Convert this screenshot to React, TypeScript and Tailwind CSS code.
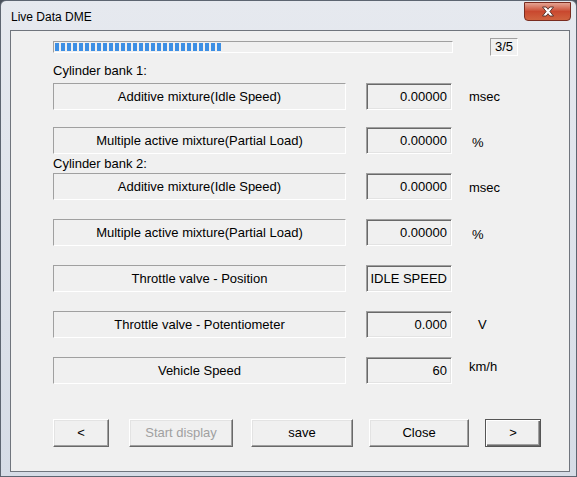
import React from 'react';

type Row = {
  label: string;
  value: string;
  unit?: string;
  unitClass?: string;
  gap: string;
};

const rowsBank1: Row[] = [
  { label: 'Additive mixture(Idle Speed)', value: '0.00000', unit: 'msec', unitClass: 'ml-[17px]', gap: 'mt-[5px]' },
  { label: 'Multiple active mixture(Partial Load)', value: '0.00000', unit: '%', unitClass: 'ml-[20px] mt-[4px]', gap: 'mt-[17px]' },
];

const rowsBank2: Row[] = [
  { label: 'Additive mixture(Idle Speed)', value: '0.00000', unit: 'msec', unitClass: 'ml-[17px] mt-[2px]', gap: '' },
  { label: 'Multiple active mixture(Partial Load)', value: '0.00000', unit: '%', unitClass: 'ml-[20px] mt-[4px]', gap: 'mt-[19px]' },
  { label: 'Throttle valve - Position', value: 'IDLE SPEED', gap: 'mt-[19px]' },
  { label: 'Throttle valve - Potentiometer', value: '0.000', unit: 'V', unitClass: 'ml-[26px]', gap: 'mt-[19px]' },
  { label: 'Vehicle Speed', value: '60', unit: 'km/h', unitClass: 'ml-[17px] mb-[8px]', gap: 'mt-[19px]' },
];

const DataRow: React.FC<{ row: Row }> = ({ row }) => (
  <div className={`flex items-center h-[27px] ${row.gap}`}>
    <div className="w-[293px] h-[27px] flex items-center justify-center border-t border-l border-t-[#a0a0a0] border-l-[#a0a0a0] border-b border-r border-b-white border-r-white">
      {row.label}
    </div>
    <div className="ml-[20px] w-[86px] h-[27px] flex items-center justify-end pr-[4px] border border-t-[#a0a0a0] border-l-[#a0a0a0] border-b-white border-r-white shadow-[inset_1px_1px_0_0_#696969,inset_-1px_-1px_0_0_#e3e3e3]">
      {row.value}
    </div>
    {row.unit && <span className={row.unitClass}>{row.unit}</span>}
  </div>
);

const WinButton: React.FC<{
  label: string;
  width: string;
  gap?: string;
  disabled?: boolean;
  isDefault?: boolean;
}> = ({ label, width, gap = '', disabled, isDefault }) => (
  <button
    disabled={disabled}
    className={`${width} ${gap} h-[28px] flex items-center justify-center bg-[#f0f0f0] ${
      isDefault
        ? 'border border-[#555555] shadow-[inset_1px_1px_0_0_#ffffff,inset_-1px_-1px_0_0_#696969,inset_-2px_-2px_0_0_#a0a0a0]'
        : 'border border-t-white border-l-white border-b-[#696969] border-r-[#696969] shadow-[inset_-1px_-1px_0_0_#a0a0a0,inset_1px_1px_0_0_#e3e3e3]'
    } ${disabled ? 'text-[#a0a0a0]' : 'text-black'}`}
  >
    {label}
  </button>
);

const ProgressBar: React.FC<{ chunks: number }> = ({ chunks }) => (
  <div className="w-[400px] h-[12px] border border-t-[#a0a0a0] border-l-[#a0a0a0] border-b-white border-r-white bg-[#f0f0f0] flex items-center pl-[1px] gap-[2px]">
    {Array.from({ length: chunks }).map((_, i) => (
      <div key={i} className="w-[4px] h-[8px] bg-[#3d8fe4]" />
    ))}
  </div>
);

export default function App() {
  return (
    <div className="w-[577px] h-[477px] bg-[#4a515c] font-['Liberation_Sans',Arial,sans-serif] text-[13px] text-black">
      <div className="w-full h-full flex flex-col rounded-t-[6px] border border-[#5d6571] bg-gradient-to-b from-[#e6e9ef] to-[#d6dce6]">
        {/* title bar */}
        <div className="h-[29px] flex items-start">
          <span className="pl-[10px] pt-[9px] text-[12px] leading-[15px] text-black">Live Data DME</span>
          <div className="ml-auto mr-[5px] mt-[1px] w-[47px] h-[19px] rounded-b-[4px] border border-[#7a2c20] bg-gradient-to-b from-[#e3a393] via-[#c9482f] to-[#d0633f] flex items-center justify-center">
            <svg width="14" height="11" viewBox="0 0 14 11">
              <path
                d="M1.5 1 L5.2 1 L7 3.3 L8.8 1 L12.5 1 L8.9 5.5 L12.5 10 L8.8 10 L7 7.7 L5.2 10 L1.5 10 L5.1 5.5 Z"
                fill="#ffffff"
                stroke="#4d2a24"
                strokeWidth="0.9"
                strokeLinejoin="round"
              />
            </svg>
          </div>
        </div>

        {/* client area */}
        <div className="ml-[9px] mr-[6px] h-[442px] border border-[#70757d] bg-[#f0f0f0] pl-[42px]">
          <div className="mt-[7px] h-[18px] flex items-center">
            <ProgressBar chunks={28} />
            <div className="ml-[37px] w-[28px] h-[18px] flex items-center justify-center border border-t-[#a0a0a0] border-l-[#a0a0a0] border-b-white border-r-white">
              3/5
            </div>
          </div>

          <div className="mt-[7px] h-[15px] leading-[15px]">Cylinder bank 1:</div>
          {rowsBank1.map((r, i) => (
            <DataRow key={i} row={r} />
          ))}

          <div className="mt-[2px] mb-[2px] h-[15px] leading-[15px]">Cylinder bank 2:</div>
          {rowsBank2.map((r, i) => (
            <DataRow key={i} row={r} />
          ))}

          <div className="mt-[35px] flex items-center">
            <WinButton label="<" width="w-[56px]" />
            <WinButton label="Start display" width="w-[104px]" gap="ml-[20px]" disabled />
            <WinButton label="save" width="w-[102px]" gap="ml-[18px]" />
            <WinButton label="Close" width="w-[100px]" gap="ml-[16px]" />
            <WinButton label=">" width="w-[56px]" gap="ml-[16px]" isDefault />
          </div>
        </div>
      </div>
    </div>
  );
}
